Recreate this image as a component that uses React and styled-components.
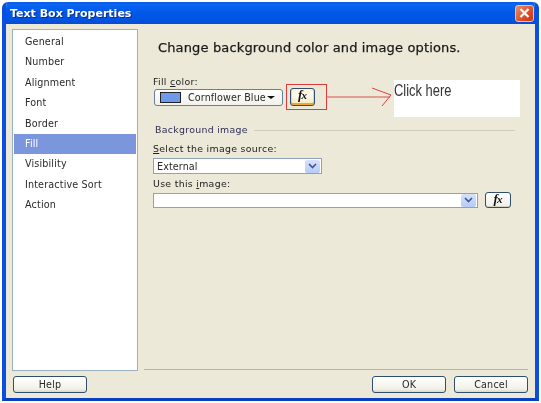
import React from "react";
import styled, { createGlobalStyle } from "styled-components";

const Global = createGlobalStyle`
  html, body { margin: 0; padding: 0; background: #fff; }
  body { width: 541px; height: 403px; overflow: hidden; font-family: "DejaVu Sans", sans-serif; }
`;
const Dialog = styled.div`
  position: relative; box-sizing: border-box; width: 537px; height: 399px; margin: 2px 0 0 2px;
  display: flex; flex-direction: column; background: #ece9d8;
  border-radius: 6px 6px 0 0; overflow: hidden; filter: blur(0.35px);
  border: solid #0a4fe0; border-width: 0 4px 3px 4px; border-bottom-color: #0a3fc0;
`;
const TitleBar = styled.div`
  flex: none; height: 22px; margin: 0 -4px; padding: 0 5px 0 8px; display: flex; align-items: center; justify-content: space-between;
  background: linear-gradient(#0a5ae6 0%, #0a66f2 12%, #0058e8 45%, #0054e3 80%, #0a4bd0 100%);
`;
const TitleText = styled.span`
  color: #fff; font: bold 11px "DejaVu Sans", sans-serif; text-shadow: 1px 1px 0 #0a2f90;
`;
const CloseBtn = styled.div`
  width: 19px; height: 17px; border-radius: 3px; border: 1px solid #f0c0b0; box-sizing: border-box;
  background: linear-gradient(135deg, #ef8a66, #d8451f 70%, #c93a16); display: flex; align-items: center; justify-content: center;
`;
const Body = styled.div`
  flex: 1; min-height: 0; display: flex; flex-direction: column; padding: 5px 7px 5px 6px;
`;
const Main = styled.div` flex: 1; min-height: 0; display: flex; `;
const NavList = styled.div`
  flex: none; box-sizing: border-box; width: 126px; background: #fff; border: 1px solid #9cb0c4; padding: 1px 1px;
`;
const NavItem = styled.div`
  height: 20.4px; line-height: 20px; padding-left: 11px;
  font-size: 9.6px; letter-spacing: 0.15px; color: ${p => (p.$active ? "#fff" : "#2a2a2a")};
  background: ${p => (p.$active ? "#7b96dc" : "transparent")};
  &:first-child { margin-top: 1px; }
`;
const Pane = styled.div`
  flex: 1; min-width: 0; display: flex; flex-direction: column; padding-left: 6px;
`;
const Form = styled.div`
  flex: 1; min-height: 0; padding: 0 0 0 9px; display: flex; flex-direction: column;
`;
const Heading = styled.h1`
  margin: 11px 0 0 5px; font-size: 13px; font-weight: 400; line-height: 16px; color: #1a1a1a; letter-spacing: 0.15px;
  -webkit-text-stroke: 0.25px #1a1a1a; white-space: nowrap;
`;
const Label = styled.div`
  font-size: 9.4px; line-height: 12px; color: #222; letter-spacing: 0.3px; margin-top: ${p => p.$top}px;
  u { text-decoration: underline; }
`;
const Row = styled.div` display: flex; align-items: center; margin-top: ${p => p.$top}px; `;
const ColorCombo = styled.div`
  box-sizing: border-box; width: 129px; height: 17px; margin-left: 1px; border: 1px solid #6b7e98; border-radius: 3px;
  background: linear-gradient(#fff, #f2f1ea); display: flex; align-items: center; padding-left: 5px;
  font-size: 9.6px; letter-spacing: 0.1px; color: #2a2a2a;
`;
const Swatch = styled.div`
  width: 21px; height: 11px; box-sizing: border-box; flex: none; margin-right: 7px; border: 1px solid #222; background: #6f9aea;
`;
const Caret = styled.span`
  width: 0; height: 0; margin-left: 1px; border: solid transparent; border-width: 3px 4px 0 4px; border-top-color: #111;
`;
const FxButton = styled.div`
  box-sizing: border-box; flex: none; width: ${p => (p.$hot ? "25px" : "26px")}; height: ${p => (p.$hot ? "18px" : "16px")};
  margin-left: 7px; padding-bottom: 3px;
  border: 1px solid #2f4f70; border-radius: 3px;
  background: ${p => (p.$hot ? "linear-gradient(#fff3d0, #fdfbf0 35%, #f7e7bd)" : "linear-gradient(#fff, #f0efe6)")};
  box-shadow: ${p => (p.$hot ? "inset 0 -2px 0 #eda62e, inset 1px 0 0 #f8d488, inset -1px 0 0 #f8d488" : "inset 0 -1px 0 #d6d3c4")};
  display: flex; align-items: baseline; justify-content: center;
  font: italic bold 13px/12px "Liberation Serif", serif; color: #111;
`;
const FxSub = styled.span` font-size: 11px; margin-left: -1px; `;
const Legend = styled.div`
  display: flex; align-items: center; margin: 18px 13px 0 2px; font-size: 9.4px; line-height: 12px; color: #2f2f55; letter-spacing: 0.3px;
  &::after { content: ""; flex: 1; height: 1px; background: #cfccbd; margin-left: 6px; }
`;
const Combo = styled.div`
  box-sizing: border-box; width: ${p => p.$w}px; height: ${p => p.$h}px; flex: none; border: 1px solid #8ea3bb; background: #fff;
  display: flex; align-items: center; justify-content: space-between; padding: 0 1px 0 3px;
  margin-top: ${p => p.$top || 0}px;
  font-size: 9.6px; letter-spacing: 0.1px; color: #2a2a2a;
`;
const DropArrow = styled.div`
  width: 15px; height: 13px; background: linear-gradient(#d6e2fb, #b6cbf6); border-radius: 2px; display: flex; align-items: center; justify-content: center;
`;
const Footer = styled.div` flex: none; display: flex; justify-content: space-between; padding-top: 5px; `;
const Rule = styled.div` flex: none; height: 1px; background: #b5b3a6; margin-bottom: 1px; `;
const ButtonGroup = styled.div` display: flex; gap: 8px; `;
const Button = styled.div`
  box-sizing: border-box; width: 74px; height: 17px; margin-left: ${p => (p.$first ? "1px" : 0)}; border: 1px solid #2f4f70; border-radius: 3px;
  background: linear-gradient(#fff, #f2f1e8 80%, #dcd8c8);
  display: flex; align-items: center; justify-content: center; font-size: 9.6px; letter-spacing: 0.2px; color: #2a2a2a;
`;
const Callout = styled.div`
  position: absolute; left: 388px; top: 78px; width: 126px; height: 37px; background: #fff;
  font: 17px/22px "Liberation Sans", sans-serif; color: #333;
`;
const CalloutText = styled.span`
  display: inline-block; transform: scaleX(0.76); transform-origin: 0 0; white-space: nowrap;
`;
const Overlay = styled.svg`
  position: absolute; left: 0; top: 0; width: 529px; height: 396px; pointer-events: none;
`;

const Chevron = () => (
  <svg width="9" height="6" viewBox="0 0 9 6"><path d="M1 1l3.5 3.5L8 1" fill="none" stroke="#3c5a8e" strokeWidth="1.7" /></svg>
);

const items = ["General", "Number", "Alignment", "Font", "Border", "Fill", "Visibility", "Interactive Sort", "Action"];

export default function App() {
  return (
    <>
      <Global />
      <Dialog>
        <TitleBar>
          <TitleText>Text Box Properties</TitleText>
          <CloseBtn>
            <svg width="11" height="10" viewBox="0 0 11 10"><path d="M1.5 1l8 8M9.5 1l-8 8" stroke="#fff" strokeWidth="2.2" /></svg>
          </CloseBtn>
        </TitleBar>
        <Body>
          <Main>
            <NavList>
              {items.map(i => <NavItem key={i} $active={i === "Fill"}>{i}</NavItem>)}
            </NavList>
            <Pane>
              <Form>
                <Heading>Change background color and image options.</Heading>
                <Label $top={20}>Fill <u>c</u>olor:</Label>
                <Row $top={0}>
                  <ColorCombo><Swatch />Cornflower Blue<Caret /></ColorCombo>
                  <FxButton $hot>f<FxSub>x</FxSub></FxButton>
                </Row>
                <Legend>Background image</Legend>
                <Label $top={7}><u>S</u>elect the image source:</Label>
                <Combo $w={169} $h={16} $top={3}>External<DropArrow><Chevron /></DropArrow></Combo>
                <Label $top={4}>Use this <u>i</u>mage:</Label>
                <Row $top={2}>
                  <Combo $w={325} $h={15}><span /><DropArrow><Chevron /></DropArrow></Combo>
                  <FxButton>f<FxSub>x</FxSub></FxButton>
                </Row>
              </Form>
              <Rule />
            </Pane>
          </Main>
          <Footer>
            <Button $first>Help</Button>
            <ButtonGroup>
              <Button>OK</Button>
              <Button>Cancel</Button>
            </ButtonGroup>
          </Footer>
        </Body>
        <Overlay viewBox="0 0 529 396">
          <rect x="280.5" y="82.5" width="40" height="25" fill="none" stroke="#e03a3a" strokeWidth="1" />
          <path d="M320 95H384" stroke="#d85050" strokeWidth="1" fill="none" />
          <path d="M366 86L385 93L376 104" stroke="#e04040" strokeWidth="1" fill="none" />
        </Overlay>
        <Callout><CalloutText>Click here</CalloutText></Callout>
      </Dialog>
    </>
  );
}
